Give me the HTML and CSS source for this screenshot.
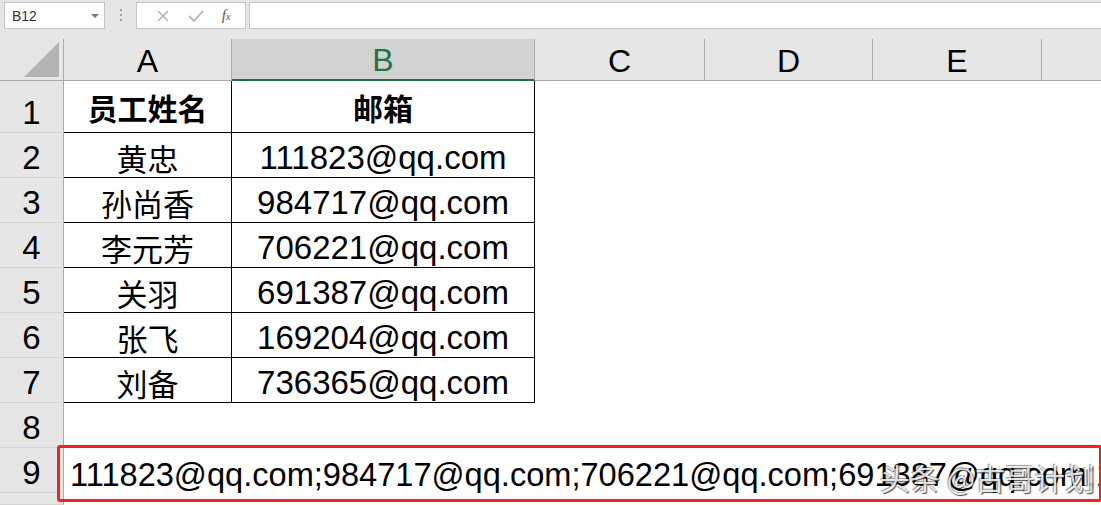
FILE: index.html
```html
<!DOCTYPE html>
<html>

<head>
    <meta charset="utf-8">
    <meta name="viewport" content="width=device-width">
    <link rel="stylesheet" href="styles.css">
</head>

<body>
    <div class="formula-bar">
        <div class="name-box">
            <span>B12</span>
            <span class="drop"></span>
        </div>
        <div class="grip"><i></i><i></i><i></i></div>
        <div class="fx-buttons">
            <svg width="14" height="14" viewBox="0 0 14 14"><path d="M2 2 L12 12 M12 2 L2 12" stroke="#b4b4b4" stroke-width="1.6" fill="none"/></svg>
            <svg width="18" height="14" viewBox="0 0 18 14"><path d="M2 7 L7 12 L16 2" stroke="#b4b4b4" stroke-width="1.8" fill="none"/></svg>
            <span class="fx">f<sub>x</sub></span>
        </div>
        <div class="formula-input"></div>
    </div>

    <div class="sheet">
        <div class="corner"><span class="tri"></span></div>
        <div class="col-head">A</div>
        <div class="col-head selected">B</div>
        <div class="col-head">C</div>
        <div class="col-head">D</div>
        <div class="col-head">E</div>
        <div class="col-head last"></div>

        <div class="row-head">1</div>
        <div class="cell name bold box">员工姓名</div>
        <div class="cell bold box">邮箱</div>
        <div class="cell rest"></div>

        <div class="row-head">2</div>
        <div class="cell name box">黄忠</div>
        <div class="cell mail box">111823@qq.com</div>
        <div class="cell rest"></div>

        <div class="row-head">3</div>
        <div class="cell name box">孙尚香</div>
        <div class="cell mail box">984717@qq.com</div>
        <div class="cell rest"></div>

        <div class="row-head">4</div>
        <div class="cell name box">李元芳</div>
        <div class="cell mail box">706221@qq.com</div>
        <div class="cell rest"></div>

        <div class="row-head">5</div>
        <div class="cell name box">关羽</div>
        <div class="cell mail box">691387@qq.com</div>
        <div class="cell rest"></div>

        <div class="row-head">6</div>
        <div class="cell name box">张飞</div>
        <div class="cell mail box">169204@qq.com</div>
        <div class="cell rest"></div>

        <div class="row-head">7</div>
        <div class="cell name box">刘备</div>
        <div class="cell mail box">736365@qq.com</div>
        <div class="cell rest"></div>

        <div class="row-head">8</div>
        <div class="cell full"></div>

        <div class="row-head">9</div>
        <div class="cell full joined">111823@qq.com;984717@qq.com;706221@qq.com;691387@qq.com;169204@qq.com;736365@qq.com</div>

        <div class="row-head"></div>
        <div class="cell full"></div>
    </div>

    <div class="highlight"></div>
    <div class="watermark">头条 @古哥计划</div>
</body>

</html>
```

FILE: styles.css
```css
html,
body {
    margin: 0;
    overflow: hidden;
    background: #ffffff;
}

body {
    font-family: "Liberation Sans", "Noto Sans CJK SC", sans-serif;
    color: #000000;
    width: 1101px;
    height: 505px;
    position: relative;
}

/* formula bar */
.formula-bar {
    display: flex;
    align-items: center;
    height: 30px;
    padding: 0 0 9px 4px;
    background: #e6e6e6;
    box-sizing: content-box;
}

.name-box {
    display: flex;
    align-items: center;
    justify-content: space-between;
    width: 101px;
    height: 27px;
    margin-top: 1px;
    box-sizing: border-box;
    padding: 0 5px 0 7px;
    background: #ffffff;
    border: 1px solid #c6c6c6;
    font-size: 14px;
    color: #333333;
}

.drop {
    width: 0;
    height: 0;
    border-left: 4px solid transparent;
    border-right: 4px solid transparent;
    border-top: 4px solid #777777;
}

.grip {
    display: flex;
    flex-direction: column;
    gap: 3px;
    width: 31px;
    align-items: center;
}

.grip i {
    width: 2px;
    height: 2px;
    background: #a0a0a0;
}

.fx-buttons {
    display: flex;
    align-items: center;
    justify-content: space-around;
    width: 110px;
    height: 27px;
    margin-top: 1px;
    box-sizing: border-box;
    padding: 0 6px 0 10px;
    background: #ffffff;
    border: 1px solid #c6c6c6;
}

.fx {
    font-family: "Liberation Serif", serif;
    font-style: italic;
    font-size: 15px;
    color: #555555;
}

.fx sub {
    font-size: 10px;
    vertical-align: 0;
}

.formula-input {
    flex: 1;
    height: 27px;
    margin: 1px 0 0 3px;
    box-sizing: border-box;
    background: #ffffff;
    border: 1px solid #c6c6c6;
    border-right: none;
}

/* sheet grid */
.sheet {
    display: grid;
    grid-template-columns: 64px 168px 303px 170px 168px 169px 1fr;
    grid-template-rows: 42px 52px repeat(8, 45px) 1fr;
    height: 466px;
}

.corner {
    background: #e6e6e6;
    border-right: 1px solid #ababab;
    border-bottom: 1px solid #ababab;
    position: relative;
}

.tri {
    position: absolute;
    right: 4px;
    bottom: 3px;
    width: 0;
    height: 0;
    border-left: 35px solid transparent;
    border-bottom: 35px solid #b4b4b4;
}

.col-head {
    display: flex;
    align-items: center;
    justify-content: center;
    background: #e6e6e6;
    border-right: 1px solid #ababab;
    border-bottom: 1px solid #ababab;
    font-size: 32px;
    padding-top: 3px;
}

.col-head.selected {
    background: #d2d2d2;
    color: #217346;
    border-bottom: 2px solid #217346;
}

.col-head.last {
    border-right: none;
}

.row-head {
    grid-column: 1;
    display: flex;
    align-items: flex-end;
    justify-content: center;
    padding-bottom: 0;
    background: #e6e6e6;
    border-right: 1px solid #ababab;
    border-bottom: 1px solid #d4d4d4;
    font-size: 33px;
}

.cell {
    display: flex;
    align-items: center;
    justify-content: center;
    font-size: 32px;
    white-space: nowrap;
}

.cell.name {
    font-size: 31px;
    padding-top: 4px;
}

.cell.mail {
    font-size: 33px;
    padding-top: 6px;
}

.cell.bold {
    font-weight: bold;
    font-size: 30px;
    padding-top: 0;
}

.cell.box {
    border-right: 1px solid #000000;
    border-bottom: 1px solid #000000;
}

.cell.rest {
    grid-column: 4 / -1;
}

.cell.full {
    grid-column: 2 / -1;
}

.cell.joined {
    justify-content: flex-start;
    font-size: 32.6px;
    padding: 9px 0 0 6px;
}

/* annotation overlays */
.highlight {
    position: absolute;
    left: 57px;
    top: 445px;
    width: 1039px;
    height: 51px;
    border: 3px solid #f5231c;
    border-radius: 3px;
}

.watermark {
    position: absolute;
    left: 880px;
    top: 455px;
    font-family: "Noto Sans CJK SC", sans-serif;
    font-size: 30px;
    color: rgba(255, 255, 255, 0.85);
    text-shadow: 1px 1px 1px rgba(0, 0, 0, 0.7), -1px -1px 1px rgba(0, 0, 0, 0.4);
}
```
